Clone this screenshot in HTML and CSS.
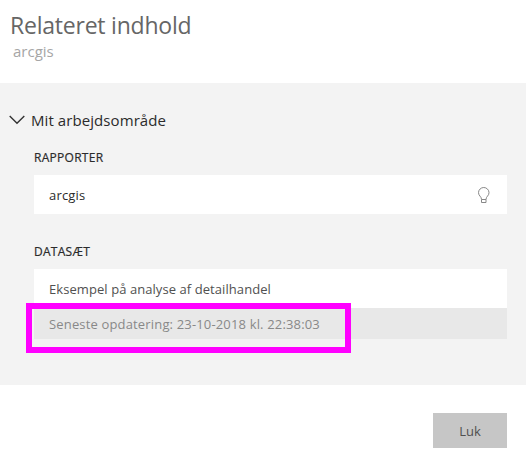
FILE: index.html
```html
<!DOCTYPE html>
<html lang="da">
<head>
<meta charset="utf-8">
<title>Relateret indhold</title>
<link rel="stylesheet" href="styles.css">
</head>
<body>
<main class="dialog">
  <header class="header">
    <h1 class="title"><span>Relateret indhold</span></h1>
    <p class="subtitle"><span>arcgis</span></p>
  </header>
  <section class="panel">
    <div class="workspace">
      <svg class="chevron" viewBox="0 0 16 10"><path d="M.7 1 8 8.3 15.3 1"/></svg>
      <h2 class="workspace-name"><span>Mit arbejdsområde</span></h2>
    </div>
    <h3 class="group-title reports"><span>RAPPORTER</span></h3>
    <div class="card">
      <span class="card-name">arcgis</span>
      <svg class="bulb" viewBox="0 0 12 16"><path d="M3.5 12.5C3.5 9.4.5 8.9.5 5.7a5.25 5.2 0 0 1 10.5 0c0 3.2-3 3.7-3 6.8zM3.5 12.5v3h4.5v-3"/></svg>
    </div>
    <h3 class="group-title datasets"><span>DATASÆT</span></h3>
    <div class="card dataset"><span class="dataset-name">Eksempel på analyse af detailhandel</span></div>
    <div class="refresh"><span>Seneste opdatering: 23-10-2018 kl. 22:38:03</span><div class="highlight"></div></div>
  </section>
  <footer class="footer"><button class="close"><span>Luk</span></button></footer>
</main>
</body>
</html>
```
FILE: styles.css
```css
* { box-sizing: border-box; }
body {
  margin: 0;
  background: #fff;
  font-family: "Open Sans", "Noto Sans", sans-serif;
  font-size: 13px;
  color: #2b2b2b;
}
h1, h2, h3, p { margin: 0; font-weight: 400; white-space: nowrap; }
.dialog { width: 526px; height: 460px; overflow: hidden; }
.header { height: 83px; padding: 9px 0 0 10px; }
.title { font-size: 23px; line-height: 32px; letter-spacing: -0.22px; color: #666; }
.subtitle { padding-left: 3px; font-size: 15px; line-height: 21px; letter-spacing: 0; color: #a6a6a6; }
.panel { height: 302px; padding: 25px 19px 0 34px; background: #f3f3f3; }
.workspace { display: flex; align-items: center; height: 24px; margin-left: -25px; gap: 6px; }
.chevron { width: 16px; height: 10px; fill: none; stroke: #333; stroke-width: 1.4; }
.workspace-name { font-size: 15px; line-height: 24px; letter-spacing: 0.08px; }
.group-title { font-size: 12px; line-height: 18px; letter-spacing: 0.28px; -webkit-text-stroke: 0.2px; }
.reports { margin: 17px 0 8px; }
.datasets { margin: 29px 0 8px; }
.card {
  display: flex;
  align-items: center;
  justify-content: space-between;
  height: 39px;
  padding: 0 17px 0 15px;
  background: #fff;
  white-space: nowrap;
}
.card-name { letter-spacing: 0.2px; }
.bulb { width: 12px; height: 16px; margin-top: 1px; fill: none; stroke: #888; stroke-width: 1; }
.dataset { color: #505050; }
.dataset-name { letter-spacing: 0.07px; }
.refresh {
  position: relative;
  height: 31px;
  padding-left: 15px;
  line-height: 32px;
  letter-spacing: 0.16px;
  color: #888;
  background: #e8e8e8;
}
.highlight {
  position: absolute;
  left: -8px;
  top: -5px;
  width: 325px;
  height: 50px;
  border: 6px solid #f0f;
}
.footer { display: flex; justify-content: flex-end; padding: 28px 19px 0 0; }
.close {
  width: 74px;
  height: 35px;
  padding: 1px 0 0;
  border: 0;
  background: #c6c6c6;
  color: #505050;
  font: inherit;
}
```
